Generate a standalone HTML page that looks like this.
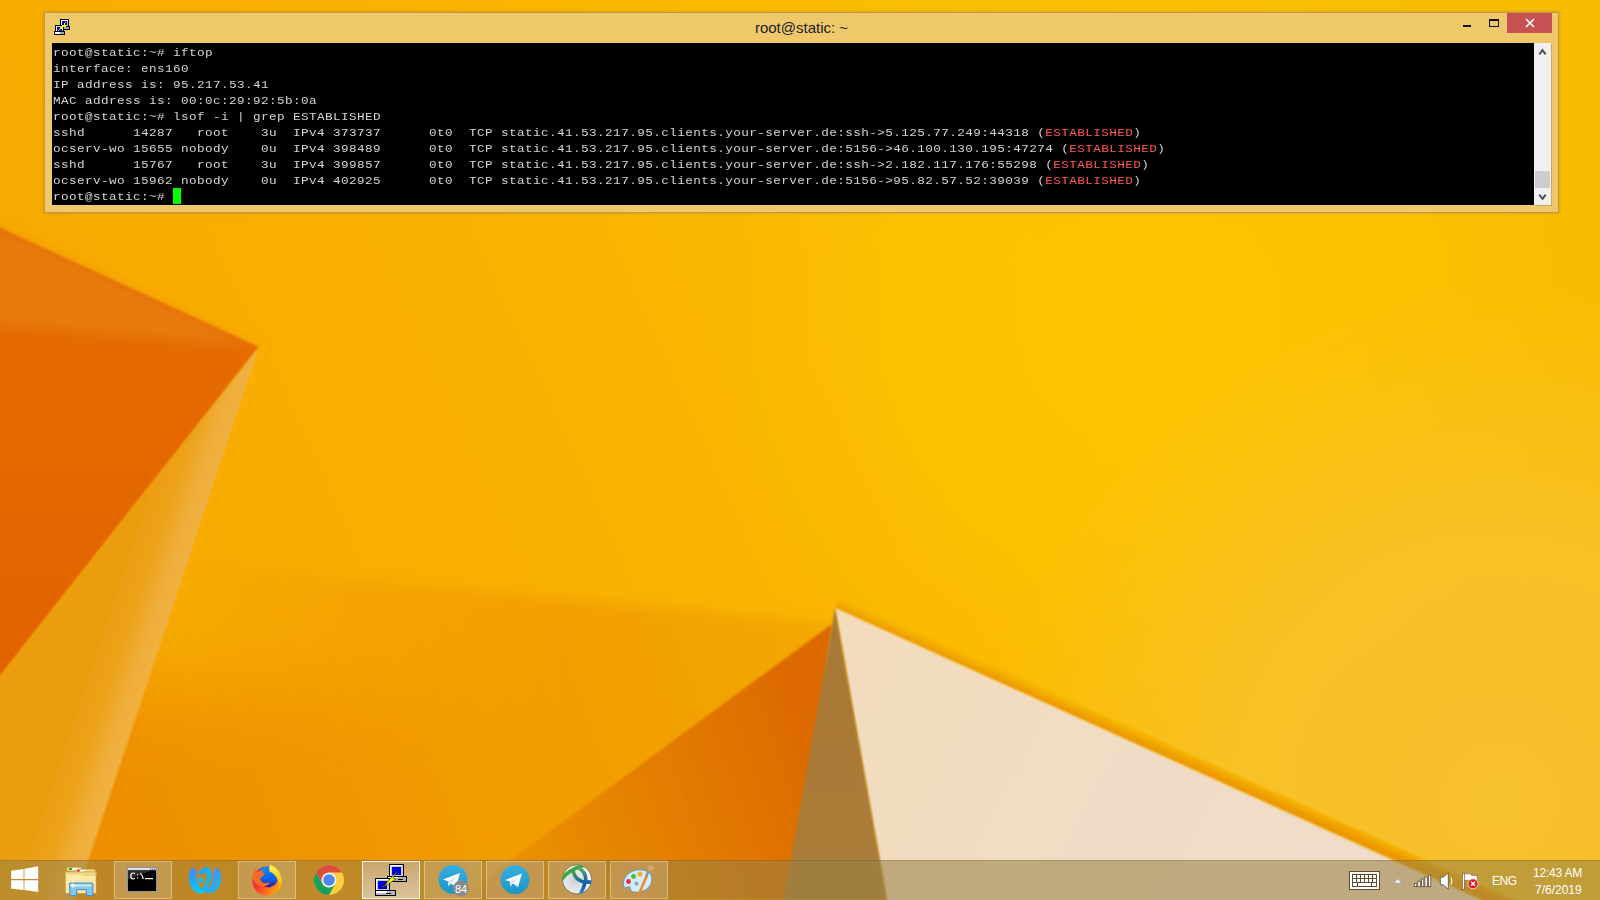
<!DOCTYPE html>
<html><head><meta charset="utf-8">
<style>
html,body{margin:0;padding:0;width:1600px;height:900px;overflow:hidden;background:#f9b000;}
#wall{position:absolute;left:0;top:0;}
.win{position:absolute;left:44px;top:12px;width:1515px;height:201px;background:#efc869;border:1px solid #b89a55;box-sizing:border-box;box-shadow:0 0 3px rgba(150,90,0,0.35);}
.title{position:absolute;left:0;right:0;top:6px;text-align:center;font-family:"Liberation Sans",sans-serif;font-size:15px;color:#1e1e28;}
.term{position:absolute;left:7px;top:30px;width:1482px;height:162px;background:#000;}
.sb{position:absolute;left:1489px;top:30px;width:17px;height:162px;background:#f0f0f0;box-shadow:1px 1px 0 #c9a85c;}
pre{margin:0;position:absolute;left:1px;top:2px;font-family:"Liberation Mono",monospace;font-size:11px;letter-spacing:0.357px;line-height:16px;color:#d4d4d4;transform:scaleX(1.15);transform-origin:0 0;}
.r{color:#ff5a5a;}
.cursor{position:absolute;left:121px;top:145px;width:8px;height:16px;background:#00ff00;}
.task{position:absolute;left:0;top:860px;width:1600px;height:40px;background:rgba(150,128,70,0.55);border-top:1px solid rgba(95,75,35,0.26);box-sizing:border-box;}
.btn{position:absolute;top:1px;width:58px;height:38px;box-sizing:border-box;}
.btn.on{background:rgba(255,235,190,0.18);border:1px solid rgba(255,240,210,0.45);}
.btn.act{background:rgba(255,240,210,0.35);border:1px solid rgba(255,255,255,0.8);}
.clock{position:absolute;font-family:"Liberation Sans",sans-serif;font-size:12px;color:#fff;}
</style></head><body>
<svg id="wall" width="1600" height="900" viewBox="0 0 1600 900">
<defs>
<linearGradient id="bg" x1="0" y1="700" x2="1100" y2="200" gradientUnits="userSpaceOnUse">
<stop offset="0" stop-color="#f5a600"/><stop offset="0.25" stop-color="#f8ac00"/><stop offset="0.5" stop-color="#f9b100"/><stop offset="0.75" stop-color="#fab900"/><stop offset="0.92" stop-color="#fabd00"/><stop offset="1" stop-color="#f9bc00"/>
</linearGradient>
<radialGradient id="hl" cx="1150" cy="320" r="430" gradientUnits="userSpaceOnUse">
<stop offset="0" stop-color="#fdc400" stop-opacity="1"/><stop offset="0.5" stop-color="#fdc400" stop-opacity="0.75"/><stop offset="1" stop-color="#fdc400" stop-opacity="0"/>
</radialGradient>
<linearGradient id="band" x1="1000" y1="669.4" x2="995.5" y2="679.6" gradientUnits="userSpaceOnUse">
<stop offset="0" stop-color="#f7b800"/><stop offset="0.5" stop-color="#f2a800"/><stop offset="1" stop-color="#eb9800"/>
</linearGradient>
<radialGradient id="rb" cx="1500" cy="800" r="520" gradientUnits="userSpaceOnUse">
<stop offset="0" stop-color="#f7c02e" stop-opacity="1"/><stop offset="0.5" stop-color="#f8c22c" stop-opacity="0.85"/><stop offset="1" stop-color="#f9c228" stop-opacity="0"/>
</radialGradient>
<linearGradient id="low" x1="800" y1="620" x2="150" y2="860" gradientUnits="userSpaceOnUse">
<stop offset="0" stop-color="#f3a600"/><stop offset="0.5" stop-color="#f19c00"/><stop offset="1" stop-color="#ee9000"/>
</linearGradient>
<linearGradient id="org" x1="0" y1="400" x2="0" y2="680" gradientUnits="userSpaceOnUse">
<stop offset="0" stop-color="#e56a00"/><stop offset="1" stop-color="#e26200"/>
</linearGradient>
<linearGradient id="strip" x1="118" y1="581" x2="175" y2="600" gradientUnits="userSpaceOnUse">
<stop offset="0" stop-color="#eb9e10"/><stop offset="0.4" stop-color="#eca21a"/><stop offset="0.75" stop-color="#efad3a"/><stop offset="1" stop-color="#f1b244"/>
</linearGradient>
<linearGradient id="shad" x1="540" y1="860" x2="820" y2="760" gradientUnits="userSpaceOnUse">
<stop offset="0" stop-color="#ea8e00"/><stop offset="0.55" stop-color="#e27a00"/><stop offset="1" stop-color="#dc6a00"/>
</linearGradient>
<linearGradient id="cream" x1="850" y1="620" x2="1300" y2="860" gradientUnits="userSpaceOnUse">
<stop offset="0" stop-color="#f3dcbc"/><stop offset="0.5" stop-color="#f1ddc4"/><stop offset="1" stop-color="#f0dcc8"/>
</linearGradient>
<linearGradient id="gray" x1="820" y1="640" x2="830" y2="860" gradientUnits="userSpaceOnUse">
<stop offset="0" stop-color="#a87834"/><stop offset="1" stop-color="#aa7c3a"/>
</linearGradient>
<filter id="b2" x="-5%" y="-5%" width="110%" height="110%"><feGaussianBlur stdDeviation="2.5"/></filter>
<filter id="b6" x="-5%" y="-5%" width="110%" height="110%"><feGaussianBlur stdDeviation="6"/></filter>
<filter id="b40" x="-50%" y="-50%" width="200%" height="200%"><feGaussianBlur stdDeviation="40"/></filter>
<linearGradient id="lowmg" x1="180" y1="0" x2="560" y2="0" gradientUnits="userSpaceOnUse"><stop offset="0" stop-color="#000"/><stop offset="1" stop-color="#fff"/></linearGradient>
<mask id="lowm" maskUnits="userSpaceOnUse" x="0" y="0" width="1600" height="900">
<rect x="0" y="0" width="1600" height="900" fill="url(#lowmg)"/>
<rect x="-100" y="690" width="1800" height="400" fill="#fff" filter="url(#b40)"/>
</mask>
<filter id="b1" x="-5%" y="-5%" width="110%" height="110%"><feGaussianBlur stdDeviation="0.8"/></filter>
</defs>
<rect width="1600" height="900" fill="url(#bg)"/>
<rect width="1600" height="900" fill="url(#hl)"/>
<rect width="1600" height="900" fill="url(#rb)"/>
<g mask="url(#lowm)"><polygon points="-20,547 831,623 640,920 -20,920" fill="url(#low)" filter="url(#b6)"/></g>
<polygon points="-5,225.5 259,347 -5,682" fill="url(#org)" filter="url(#b1)"/>
<polygon points="-5,225.5 259,347 -5,325" fill="#ea8812" opacity="0.55" filter="url(#b6)"/>
<polygon points="259,347 0,677 0,900 75,900" fill="url(#strip)" filter="url(#b1)"/>
<polygon points="832,624 511,860 460,900 790,900 800,860" fill="url(#shad)" filter="url(#b1)"/>
<polygon points="838,596 1600,938 1600,954 835,608" fill="url(#band)" filter="url(#b1)"/>
<polygon points="835,608 1600,954 1600,920 890,920" fill="url(#cream)" filter="url(#b1)"/>
<polygon points="835,608 832,626 784,900 887,900" fill="url(#gray)" filter="url(#b1)"/>
</svg>

<div class="win">
  <svg style="position:absolute;left:9px;top:6px" width="16" height="16" viewBox="0 0 16 16" shape-rendering="crispEdges">
    <rect x="6" y="0" width="9" height="9" fill="#000"/><rect x="7" y="1" width="7" height="7" fill="#c0c0c0"/><rect x="7" y="1" width="6" height="1" fill="#fff"/><rect x="7" y="1" width="1" height="6" fill="#fff"/><rect x="8" y="2" width="5" height="4" fill="#0000e0"/>
    <rect x="5" y="7" width="11" height="4" fill="#000"/><rect x="6" y="8" width="9" height="2" fill="#a8a8a8"/>
    <rect x="1" y="6" width="9" height="8" fill="#000"/><rect x="2" y="7" width="7" height="6" fill="#c0c0c0"/><rect x="2" y="7" width="1" height="5" fill="#fff"/><rect x="3" y="8" width="5" height="4" fill="#0000e0"/>
    <rect x="0" y="12" width="11" height="4" fill="#000"/><rect x="1" y="13" width="5" height="2" fill="#fff"/><rect x="6" y="13" width="4" height="2" fill="#a8a8a8"/>
    <rect x="11" y="3" width="1" height="1" fill="#ff0"/><rect x="10" y="4" width="1" height="2" fill="#ff0"/><rect x="8" y="6" width="4" height="2" fill="#ff0"/><rect x="6" y="7" width="3" height="3" fill="#ff0"/><rect x="5" y="10" width="1" height="1" fill="#ff0"/><rect x="4" y="11" width="1" height="1" fill="#ff0"/>
  </svg>
  <div class="title">root@static: ~</div>
  <div style="position:absolute;left:1418px;top:12px;width:8px;height:2px;background:#111"></div>
  <div style="position:absolute;left:1444px;top:6px;width:10px;height:8px;border:1px solid #111;border-top-width:2px;box-sizing:border-box"></div>
  <div style="position:absolute;left:1462px;top:0px;width:45px;height:20px;background:#c75050"></div>
  <svg style="position:absolute;left:1480px;top:5px" width="10" height="10" viewBox="0 0 10 10"><path d="M1 1L9 9M9 1L1 9" stroke="#fff" stroke-width="1.6"/></svg>
  <div class="term"><pre>root@static:~# iftop
interface: ens160
IP address is: 95.217.53.41
MAC address is: 00:0c:29:92:5b:0a
root@static:~# lsof -i | grep ESTABLISHED
sshd      14287   root    3u  IPv4 373737      0t0  TCP static.41.53.217.95.clients.your-server.de:ssh-&gt;5.125.77.249:44318 (<span class="r">ESTABLISHED</span>)
ocserv-wo 15655 nobody    0u  IPv4 398489      0t0  TCP static.41.53.217.95.clients.your-server.de:5156-&gt;46.100.130.195:47274 (<span class="r">ESTABLISHED</span>)
sshd      15767   root    3u  IPv4 399857      0t0  TCP static.41.53.217.95.clients.your-server.de:ssh-&gt;2.182.117.176:55298 (<span class="r">ESTABLISHED</span>)
ocserv-wo 15962 nobody    0u  IPv4 402925      0t0  TCP static.41.53.217.95.clients.your-server.de:5156-&gt;95.82.57.52:39039 (<span class="r">ESTABLISHED</span>)
root@static:~# </pre><div class="cursor"></div></div>
  <div class="sb">
    <svg style="position:absolute;left:4px;top:5px" width="9" height="8" viewBox="0 0 9 8"><path d="M1.3 6.4L4.5 2.2L7.7 6.4" stroke="#505050" stroke-width="2" fill="none"/></svg>
    <div style="position:absolute;left:1px;top:128px;width:15px;height:17px;background:#cdcdcd"></div>
    <svg style="position:absolute;left:4px;top:150px" width="9" height="8" viewBox="0 0 9 8"><path d="M1.3 1.6L4.5 5.8L7.7 1.6" stroke="#505050" stroke-width="2" fill="none"/></svg>
  </div>
</div>

<div class="task"></div>
<svg style="position:absolute;left:0;top:860px" width="1600" height="40" viewBox="0 860 1600 40">
<defs>
<radialGradient id="ffo" cx="0.35" cy="0.75" r="0.8"><stop offset="0" stop-color="#ff9a00"/><stop offset="0.5" stop-color="#ff5a1e"/><stop offset="1" stop-color="#e8204a"/></radialGradient>
<linearGradient id="ffy" x1="0" y1="0" x2="0" y2="1"><stop offset="0" stop-color="#fff44f"/><stop offset="1" stop-color="#ff9a00"/></linearGradient>
<radialGradient id="ffb" cx="0.5" cy="0.3" r="0.7"><stop offset="0" stop-color="#00b0ff"/><stop offset="1" stop-color="#3a2fb0"/></radialGradient>
<linearGradient id="tg" x1="0" y1="0" x2="0" y2="1"><stop offset="0" stop-color="#37aee2"/><stop offset="1" stop-color="#1e96c8"/></linearGradient>
<linearGradient id="wf" x1="0" y1="0" x2="1" y2="1"><stop offset="0" stop-color="#2fa8f0"/><stop offset="1" stop-color="#4aa0f8"/></linearGradient>
<radialGradient id="cis" cx="0.4" cy="0.35" r="0.7"><stop offset="0" stop-color="#ffffff"/><stop offset="1" stop-color="#b8bcc4"/></radialGradient>
</defs>
<!-- buttons -->
<rect x="114.5" y="861.5" width="57" height="37" fill="rgba(222,218,222,0.22)" stroke="rgba(255,240,215,0.45)"/>
<rect x="238.5" y="861.5" width="57" height="37" fill="rgba(222,218,222,0.22)" stroke="rgba(255,240,215,0.45)"/>
<linearGradient id="actb" x1="0" y1="862" x2="0" y2="898" gradientUnits="userSpaceOnUse"><stop offset="0" stop-color="#cba66c"/><stop offset="1" stop-color="#d9c39c"/></linearGradient>
<rect x="362.5" y="861.5" width="57" height="37" fill="url(#actb)" stroke="rgba(255,255,255,0.9)"/>
<rect x="424.5" y="861.5" width="57" height="37" fill="rgba(222,218,222,0.22)" stroke="rgba(255,240,215,0.45)"/>
<rect x="486.5" y="861.5" width="57" height="37" fill="rgba(222,218,222,0.22)" stroke="rgba(255,240,215,0.45)"/>
<rect x="548.5" y="861.5" width="57" height="37" fill="rgba(222,218,222,0.22)" stroke="rgba(255,240,215,0.45)"/>
<rect x="610.5" y="861.5" width="57" height="37" fill="rgba(222,218,222,0.22)" stroke="rgba(255,240,215,0.45)"/>
<!-- windows logo -->
<g fill="#fff">
<polygon points="11.2,870.7 23.6,869 23.6,879 11.2,879"/>
<polygon points="24.4,868.7 38.2,866.2 38.2,879 24.4,879"/>
<polygon points="11.2,880.2 23.6,880.2 23.6,889.9 11.2,888.7"/>
<polygon points="24.4,880.2 38.2,880.2 38.2,892.1 24.4,890.1"/>
</g>
<!-- explorer -->
<g>
<path d="M67 871 v-3.5 h14 v3.5z" fill="#f3dd8e" stroke="#d4b060" stroke-width="0.6"/>
<rect x="69" y="868" width="3" height="2" fill="#10c020"/><rect x="72" y="868" width="6" height="2" fill="#fff"/>
<path d="M75.5 873 v-3.5 h19.5 v3.5z" fill="#f3dd8e" stroke="#d4b060" stroke-width="0.6"/>
<rect x="77" y="869.8" width="2.8" height="2" fill="#d83020"/><rect x="79.8" y="869.8" width="6" height="2" fill="#fff"/>
<path d="M83 875.5 v-4 h13.3 v4z" fill="#f3dd8e" stroke="#d4b060" stroke-width="0.6"/>
<rect x="85" y="872" width="3" height="2" fill="#1890e8"/><rect x="88" y="872" width="5" height="2" fill="#fff"/>
<path d="M65.5 872 h30.5 v21.2 h-30.5z" fill="#f0d680" stroke="#cfae62" stroke-width="0.7"/>
<path d="M66.3 874.5 h16 l1 1.5 h12.2 v16.8 h-29.2z" fill="#fbe9a6"/>
<path d="M69.5 884 q0 -1 1 -1 h21.5 q1 0 1 1 v11 q0 0.7 -0.7 0.7 h-5.3 q-0.7 0 -0.7 -0.7 v-5.3 h-9.6 v5.3 q0 0.7 -0.7 0.7 h-5.3 q-0.7 0 -0.7 -0.7z" fill="#86c8ec" stroke="#2f86c6" stroke-width="0.9"/>
<path d="M70.5 884.5 h21 v2 h-21z" fill="#d8f0fc" opacity="0.8"/>
<circle cx="73" cy="885.5" r="1.8" fill="#fff"/>
<path d="M73 878 v10 M70 885.5 h6 M71 882 l4 -3" stroke="#fff" stroke-width="0.5" opacity="0.7"/>
</g>
<!-- cmd -->
<g>
<rect x="127.5" y="867.5" width="29" height="24" fill="#000" stroke="#8898ac" stroke-width="1"/>
<rect x="128" y="868" width="28" height="2.2" fill="#dde2ec"/>
<rect x="150" y="868.6" width="1.2" height="1.2" fill="#3a5a90"/><rect x="152" y="868.6" width="1.2" height="1.2" fill="#3a5a90"/><rect x="154" y="868.6" width="1.2" height="1.2" fill="#3a5a90"/>
<path d="M128 870.2 h24 q-8 3 -24 9z" fill="#3a3a3a" opacity="0.8"/>
<path d="M134.8 873.8 q-0.6 -0.8 -1.8 -0.8 q-2.2 0 -2.2 3 q0 3 2.2 3 q1.2 0 1.8 -0.8" stroke="#fff" stroke-width="1.2" fill="none"/>
<rect x="137" y="874.2" width="1.2" height="1.2" fill="#fff"/><rect x="137" y="877.2" width="1.2" height="1.2" fill="#fff"/>
<path d="M140.5 873 l1 2.2 l1 1 l0.8 2.8" stroke="#fff" stroke-width="1.1" fill="none"/>
<rect x="145" y="878" width="8" height="1.2" fill="#fff"/>
</g>
<!-- waterfox -->
<defs>
<linearGradient id="wfg" x1="0" y1="867" x2="0" y2="893" gradientUnits="userSpaceOnUse"><stop offset="0" stop-color="#4e86f4"/><stop offset="0.55" stop-color="#20a8f6"/><stop offset="1" stop-color="#0ccaf6"/></linearGradient>
<linearGradient id="wfg2" x1="200" y1="867" x2="222" y2="893" gradientUnits="userSpaceOnUse"><stop offset="0" stop-color="#6a80f0"/><stop offset="0.5" stop-color="#3a9cf4"/><stop offset="1" stop-color="#10c0f6"/></linearGradient>
</defs>
<path d="M193.5 867.5 C190 868 188.5 874 189 880 C189.5 888 195 893.5 201 893.5 C205 893.5 207.5 891 206 889.5 C202 889 197.5 886 197 879 C196.5 873 197.5 869 193.5 867.5 Z" fill="url(#wfg)"/>
<path d="M216.5 868 C220 868.5 221.5 874 221 880 C220.5 888 215 893 209 893 C205 893 202.5 891 204 889.5 C208 889 212.5 886 213 879 C213.5 873 212.5 869 216.5 868 Z" fill="url(#wfg2)"/>
<path d="M206.5 867 C211 868 212.5 872 211.5 877 C210.5 882 208.5 886 206 890.5 L202.5 889 C205 884.5 206.8 880 206.8 876 C206.8 873 205 871.5 203.5 871 Z" fill="#18b4f6"/>
<path d="M198 872.5 L201.5 869.5 L204.5 867 L207.5 867.8 L206 871.5 L203.5 874.5 L200 874.8z" fill="#1aa8f4"/>
<circle cx="200.8" cy="880.3" r="2.6" fill="#18bcf6"/>
<!-- firefox -->
<defs>
<linearGradient id="ffr" x1="252" y1="875" x2="280" y2="892" gradientUnits="userSpaceOnUse"><stop offset="0" stop-color="#e8206a"/><stop offset="0.3" stop-color="#ff3030"/><stop offset="0.7" stop-color="#ff7a1a"/><stop offset="1" stop-color="#ffb000"/></linearGradient>
<linearGradient id="ffy2" x1="272" y1="865" x2="282" y2="890" gradientUnits="userSpaceOnUse"><stop offset="0" stop-color="#fff24a"/><stop offset="1" stop-color="#ffa800"/></linearGradient>
<linearGradient id="ffb2" x1="0" y1="868" x2="0" y2="887" gradientUnits="userSpaceOnUse"><stop offset="0" stop-color="#0a84ff"/><stop offset="0.6" stop-color="#1060e0"/><stop offset="1" stop-color="#2a1aa0"/></linearGradient>
</defs>
<circle cx="267" cy="881" r="14.5" fill="url(#ffr)"/>
<path d="M259 869.5 q5 -3.5 12 -3 v20.5 q-6 1 -10 -3z" fill="url(#ffb2)"/>
<circle cx="269.5" cy="878.5" r="8.3" fill="url(#ffb2)"/>
<path d="M270 864.5 q11 4 12 17 q-1 6 -4 9 q2 -8 -2 -14 q-3 -4 -6.5 -5 q-1 -3 0.5 -7z" fill="url(#ffy2)"/>
<path d="M255.5 868 l1.5 4 q2.5 -2 6.5 -1.5 l-1.5 2 l3 1 q-1 2 -3 3 q-2 1 -2 3 q1 3 4 3.5 q4 0.5 6 -1 q-1 3 -5 4 q-6 1 -10 -3 q-3 -4 -2 -9z" fill="#ff6a20"/>
<!-- chrome -->
<circle cx="329" cy="880" r="15" fill="#fdcf3f"/>
<path d="M316 872.5 A15 15 0 0 1 342 872.5 L329 872.5 A7.5 7.5 0 0 0 322.5 883.75 Z" fill="#dd4b3e"/>
<path d="M316 872.5 A15 15 0 0 0 329 895 L335.5 883.75 A7.5 7.5 0 0 1 322.5 883.75 Z" fill="#16a05a"/>
<circle cx="329" cy="880" r="7.3" fill="#f4f4f4"/>
<circle cx="329" cy="880" r="5.8" fill="#4a88ee"/>
<!-- putty big -->
<g shape-rendering="crispEdges">
<rect x="389" y="864" width="15" height="14" fill="#000"/><rect x="390" y="865" width="13" height="12" fill="#c8c8c8"/><rect x="390" y="865" width="12" height="1" fill="#fff"/><rect x="390" y="865" width="1" height="11" fill="#fff"/><rect x="392" y="867" width="9" height="8" fill="#0000e8"/>
<rect x="387" y="876" width="20" height="6" fill="#000"/><rect x="388" y="877" width="18" height="4" fill="#b0b0b0"/><rect x="388" y="877" width="10" height="1" fill="#fff"/><rect x="398" y="879" width="5" height="1" fill="#000"/>
<rect x="375" y="878" width="15" height="14" fill="#000"/><rect x="376" y="879" width="13" height="12" fill="#c8c8c8"/><rect x="376" y="879" width="1" height="11" fill="#fff"/><rect x="376" y="879" width="12" height="1" fill="#fff"/><rect x="378" y="881" width="9" height="8" fill="#0000e8"/>
<rect x="375" y="890" width="21" height="6" fill="#000"/><rect x="376" y="891" width="19" height="4" fill="#b8b8b8"/><rect x="376" y="891" width="11" height="2" fill="#fff"/><rect x="386" y="893" width="5" height="1" fill="#000"/>
</g>
<path d="M384 886 L398 870 L393 878 L396 879 L382 888 L387 881z" fill="#ffff00" stroke="#000" stroke-width="0.5"/>
<!-- telegram 84 -->
<circle cx="453" cy="879.5" r="14.5" fill="url(#tg)"/>
<path d="M443 879.5 L460 873 L456 887 L451 883.5 L448 886 L448.5 881.5z" fill="#fff"/>
<path d="M448.5 881.5 L458 875 L451 883.5 L448 886z" fill="#d0e6f2"/>
<circle cx="461" cy="888.5" r="8" fill="#8a8a8a"/>
<text x="461" y="893" font-family="Liberation Sans" font-size="11" fill="#fff" text-anchor="middle">84</text>
<!-- telegram -->
<circle cx="515" cy="879.7" r="14.5" fill="url(#tg)"/>
<path d="M505 880 L522 873.5 L518 887 L513 883.5 L510 886.5 L510.5 882z" fill="#fff"/>
<path d="M510.5 882 L520 875.5 L513 883.5 L510 886.5z" fill="#d0e6f2"/>
<!-- cisco -->
<defs>
<linearGradient id="cga" x1="573" y1="872" x2="592" y2="882" gradientUnits="userSpaceOnUse"><stop offset="0" stop-color="#3a9a60"/><stop offset="0.5" stop-color="#1a6aa0"/><stop offset="1" stop-color="#0a5cc0"/></linearGradient>
<linearGradient id="cgb2" x1="0" y1="867" x2="0" y2="894" gradientUnits="userSpaceOnUse"><stop offset="0" stop-color="#60b060"/><stop offset="0.35" stop-color="#2a7a88"/><stop offset="0.65" stop-color="#0a58b8"/><stop offset="1" stop-color="#2a88e8"/></linearGradient>
<radialGradient id="cis2" cx="0.42" cy="0.55" r="0.62"><stop offset="0" stop-color="#ccd2d8"/><stop offset="0.75" stop-color="#eef0f2"/><stop offset="1" stop-color="#ffffff"/></radialGradient>
</defs>
<clipPath id="cclip"><circle cx="577" cy="879.4" r="14.3"/></clipPath>
<circle cx="577" cy="879.4" r="14.6" fill="url(#cis2)" stroke="#5a5040" stroke-width="0.7"/>
<g clip-path="url(#cclip)" fill="none" stroke-width="3.6">
<path d="M561 880 Q569 869 585 865" stroke="#3aa83a"/>
<path d="M573 870.5 Q574.5 879 582 881.5 L593 882.5" stroke="url(#cga)"/>
<path d="M578.5 868 Q586.5 872.5 585.5 880 Q584.5 887 580 895" stroke="url(#cgb2)"/>
</g>
<!-- paint -->
<path d="M623.6 886 C622.5 880 626 874 633 871 C640 868.5 648 870 651 875 C653 880 651 886 646 889.5 C641 892.5 634 893.5 631 890.5 C630 889 631 887.5 629.5 886.8 C628 886.2 626.5 888 624.8 887.8 Z" fill="#d4ecfa" stroke="#4898d0" stroke-width="0.9"/>
<circle cx="636.5" cy="883.6" r="1.5" fill="#c49a55" stroke="#4898d0" stroke-width="0.8"/>
<circle cx="628.5" cy="881.5" r="2.4" fill="#e83030"/>
<circle cx="633.5" cy="876.5" r="2.4" fill="#48b838"/>
<circle cx="640" cy="874" r="2.6" fill="#f8b020"/>
<path d="M638.5 895 L646.5 876.5" stroke="#f08a28" stroke-width="2.6" stroke-linecap="round"/>
<path d="M646 877 L648.5 871" stroke="#909090" stroke-width="2.4"/>
<path d="M647.5 870 q0 -4 2 -5 q3 0 5.5 2.5 q-1.5 2.5 -4.5 3.5z" fill="#d0a870"/>
<!-- tray -->
<g>
<g shape-rendering="crispEdges">
<rect x="1349" y="871" width="31" height="19" rx="1" fill="#5c4c30"/>
<rect x="1350" y="872" width="29" height="17" fill="#fff"/>
<rect x="1352" y="874" width="25" height="13" fill="#5c4c30"/>
<g fill="#fff">
<rect x="1353" y="875" width="3" height="3"/><rect x="1357" y="875" width="3" height="3"/><rect x="1361" y="875" width="3" height="3"/><rect x="1365" y="875" width="3" height="3"/><rect x="1369" y="875" width="3" height="3"/><rect x="1373" y="875" width="3" height="3"/>
<rect x="1353" y="879" width="3" height="3"/><rect x="1357" y="879" width="3" height="3"/><rect x="1361" y="879" width="3" height="3"/><rect x="1365" y="879" width="3" height="3"/><rect x="1369" y="879" width="3" height="3"/><rect x="1373" y="879" width="3" height="3"/>
<rect x="1353" y="883" width="4" height="3"/><rect x="1358" y="883" width="13" height="3"/><rect x="1372" y="883" width="4" height="3"/>
</g>
</g>
<path d="M1393.5 883.5 L1397.8 878.3 L1402.2 883.5z" fill="#e4e8f0" stroke="#8a8070" stroke-width="0.5"/>
<g fill="#fff" stroke="#5c4c30" stroke-width="0.8">
<rect x="1414.4" y="883.4" width="2.4" height="3.3"/><rect x="1417.9" y="881.2" width="2.4" height="5.5"/><rect x="1421.4" y="879" width="2.4" height="7.7"/><rect x="1424.9" y="877" width="2.4" height="9.7"/><rect x="1428.4" y="875" width="2.4" height="11.7"/>
</g>
<path d="M1440.3 877.2 h3 l5 -4.4 v16.4 l-5 -4.4 h-3z" fill="#fff" stroke="#5c4c30" stroke-width="0.8"/>
<path d="M1450.8 877.5 q2.2 3.5 0 7" stroke="#fff" stroke-width="1.1" fill="none"/>
<rect x="1462.4" y="873.2" width="2" height="16" fill="#fff" stroke="#5c4c30" stroke-width="0.6"/>
<path d="M1464.4 873.8 h6 l1.2 1.6 h5.6 v6.5 h-6.6 l-1.2 -1.6 h-5z" fill="#fff" stroke="#5c4c30" stroke-width="0.5"/>
<circle cx="1473" cy="883.8" r="5" fill="#d81c1c" stroke="#fff" stroke-width="0.7"/>
<path d="M1471 881.8 L1475 885.8 M1475 881.8 L1471 885.8" stroke="#fff" stroke-width="1.5"/>
</g>
</svg>
<div class="clock" style="left:1492px;top:874px;letter-spacing:-0.4px">ENG</div>
<div class="clock" style="left:1533px;top:866px;letter-spacing:-0.2px">12:43 AM</div>
<div class="clock" style="left:1535px;top:883px;">7/6/2019</div>
</body></html>
